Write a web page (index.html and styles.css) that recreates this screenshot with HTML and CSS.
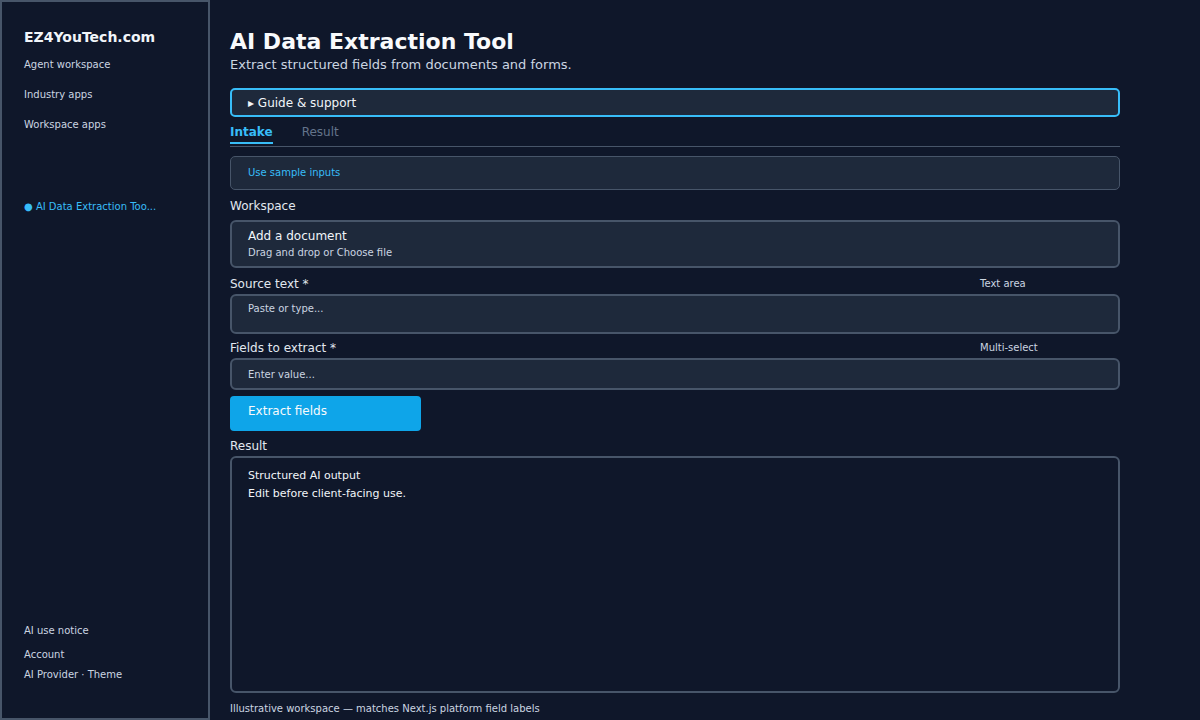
FILE: index.html
```html
<!DOCTYPE html>
<html lang="en">
<head>
    <meta charset="UTF-8">
    <meta name="viewport" content="width=device-width, initial-scale=1.0">
    <title>AI Data Extraction Tool</title>
    <link rel="stylesheet" href="styles.css">
</head>
<body>
<div class="layout">
    <aside class="sidebar">
        <div class="brand">EZ4YouTech.com</div>
        <nav class="nav">
            <a class="nav-item">Agent workspace</a>
            <a class="nav-item">Industry apps</a>
            <a class="nav-item">Workspace apps</a>
        </nav>
        <div class="nav-active">● AI Data Extraction Too...</div>
        <div class="sidebar-bottom">
            <div class="notice">AI use notice</div>
            <div class="bottom-link">Account</div>
            <div class="bottom-link">AI Provider · Theme</div>
        </div>
    </aside>

    <main class="main">
        <h1 class="title">AI Data Extraction Tool</h1>
        <p class="subtitle">Extract structured fields from documents and forms.</p>

        <div class="guide">▸ Guide &amp; support</div>

        <div class="tabs">
            <span class="tab active">Intake</span>
            <span class="tab">Result</span>
        </div>

        <div class="sample-box">Use sample inputs</div>

        <div class="label workspace-label">Workspace</div>
        <div class="upload">
            <div class="upload-title">Add a document</div>
            <div class="upload-sub">Drag and drop or Choose file</div>
        </div>

        <div class="label-row">
            <span class="label">Source text *</span>
            <span class="hint">Text area</span>
        </div>
        <div class="field textarea">Paste or type...</div>

        <div class="label-row">
            <span class="label">Fields to extract *</span>
            <span class="hint">Multi-select</span>
        </div>
        <div class="field input">Enter value...</div>

        <button class="extract-button">Extract fields</button>

        <div class="label result-label">Result</div>
        <div class="result">
            <div>Structured AI output</div>
            <div>Edit before client-facing use.</div>
        </div>

        <p class="footer">Illustrative workspace — matches Next.js platform field labels</p>
    </main>
</div>
</body>
</html>
```

FILE: styles.css
```css
* {
    margin: 0;
    padding: 0;
    box-sizing: border-box;
}

body {
    background: #0f172a;
    color: #e2e8f0;
    font-family: "DejaVu Sans", sans-serif;
}

.layout {
    display: flex;
    height: 720px;
}

.sidebar {
    width: 210px;
    flex-shrink: 0;
    border: 2px solid #475569;
    padding: 26px 0 36px 22px;
    display: flex;
    flex-direction: column;
}

.brand {
    font-size: 14px;
    font-weight: bold;
    line-height: 18px;
    color: #f1f5f9;
}

.nav {
    display: flex;
    flex-direction: column;
    gap: 16px;
    margin-top: 12px;
}

.nav-item {
    font-size: 10px;
    line-height: 14px;
    color: #cbd5e1;
}

.nav-active {
    margin-top: 68px;
    font-size: 10px;
    line-height: 14px;
    color: #38bdf8;
}

.sidebar-bottom {
    margin-top: auto;
    font-size: 10px;
    line-height: 14px;
    color: #cbd5e1;
}

.notice {
    margin-bottom: 10px;
}

.bottom-link {
    margin-bottom: 6px;
}

.bottom-link:last-child {
    margin-bottom: 0;
}

.main {
    width: 910px;
    padding: 29px 0 0 20px;
    display: flex;
    flex-direction: column;
}

.title {
    font-size: 22px;
    line-height: 26px;
    font-weight: bold;
    color: #f8fafc;
}

.subtitle {
    margin-top: 1px;
    font-size: 13px;
    line-height: 18px;
    color: #cbd5e1;
}

.guide {
    margin-top: 14px;
    height: 29px;
    border: 2px solid #38bdf8;
    border-radius: 5px;
    background: #1e293b;
    padding: 0 16px;
    font-size: 12px;
    line-height: 26px;
    color: #f1f5f9;
}

.tabs {
    margin-top: 6px;
    display: flex;
    gap: 29px;
    border-bottom: 1px solid #475569;
    padding-bottom: 2px;
}

.tab {
    font-size: 12px;
    line-height: 16px;
    padding: 1px 0 2px;
    border-bottom: 2px solid transparent;
    color: #64748b;
}

.tab.active {
    color: #38bdf8;
    font-weight: bold;
    border-bottom-color: #38bdf8;
}

.sample-box {
    margin-top: 9px;
    height: 34px;
    border: 1px solid #475569;
    border-radius: 5px;
    background: #1e293b;
    padding: 0 17px;
    font-size: 10px;
    line-height: 32px;
    color: #38bdf8;
}

.label {
    font-size: 12px;
    line-height: 16px;
    color: #e2e8f0;
}

.workspace-label {
    margin-top: 8px;
}

.upload {
    margin-top: 6px;
    height: 48px;
    border: 2px solid #475569;
    border-radius: 6px;
    background: #1e293b;
    padding: 6px 16px 0;
}

.upload-title {
    font-size: 12px;
    line-height: 16px;
    color: #f1f5f9;
}

.upload-sub {
    margin-top: 2px;
    font-size: 10px;
    line-height: 14px;
    color: #cbd5e1;
}

.label-row {
    display: flex;
    justify-content: space-between;
    align-items: center;
    height: 16px;
    margin-top: 8px;
    width: 890px;
}

.hint {
    width: 140px;
    font-size: 10px;
    line-height: 14px;
    color: #cbd5e1;
}

.field {
    margin-top: 2px;
    border: 2px solid #475569;
    border-radius: 6px;
    background: #1e293b;
    padding: 0 16px;
    font-size: 10px;
    color: #cbd5e1;
}

.textarea {
    height: 40px;
    padding-top: 6px;
    line-height: 14px;
}

.field.input {
    height: 32px;
    line-height: 29px;
}

.textarea + .label-row {
    margin-top: 6px;
}

.extract-button {
    margin-top: 6px;
    width: 191px;
    height: 35px;
    border: none;
    border-radius: 4px;
    background: #0ea5e9;
    color: #f8fafc;
    font-family: "DejaVu Sans", sans-serif;
    font-size: 12px;
    text-align: left;
    padding: 0 18px 5px;
    cursor: pointer;
}

.result-label {
    margin-top: 7px;
}

.result {
    margin-top: 2px;
    height: 237px;
    border: 2px solid #475569;
    border-radius: 6px;
    padding: 9px 16px;
    font-size: 11px;
    line-height: 18px;
    color: #f1f5f9;
}

.footer {
    margin-top: 9px;
    font-size: 10px;
    line-height: 14px;
    color: #cbd5e1;
}
```
